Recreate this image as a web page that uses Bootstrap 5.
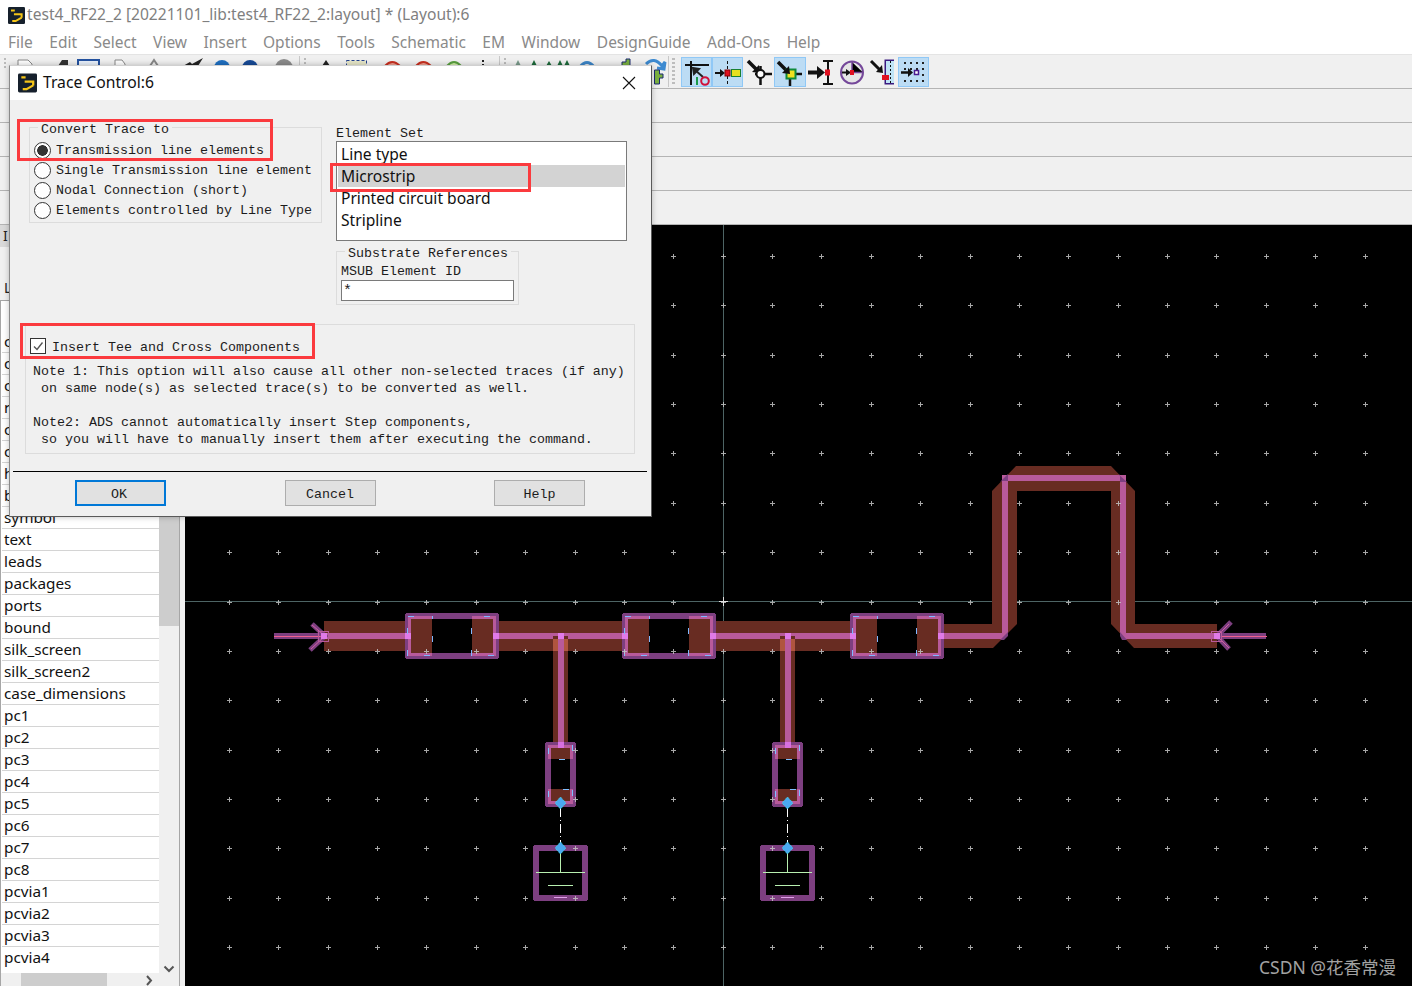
<!DOCTYPE html>
<html lang="en">
<head>
    <meta charset="UTF-8">
    <meta name="viewport" content="width=device-width, initial-scale=1.0">
    <title>Trace Control</title>
    <link href="https://cdn.jsdelivr.net/npm/bootstrap@5.3.0/dist/css/bootstrap.min.css" rel="stylesheet">
    <style>
        html, body { margin: 0; height: 100%; overflow: hidden; background: #f0f0f0; }
        .app-win { position: relative; width: 1412px; height: 986px; overflow: hidden; font-family: "Noto Sans", "Liberation Sans", sans-serif; }

        .title-row { height: 30px; background: #fff; padding-left: 8px; color: #7f7f7f; font-size: 15.6px; }
        .title-row svg { margin-right: 2px; margin-top: 1px; }
        .menu-row { height: 25px; background: #fff; border-bottom: 1px solid #e4e4e4; padding-left: 8px; gap: 16.5px; color: #8a8a8a; font-size: 15.5px; padding-top: 2px; }
        .tool-row { height: 34px; background: #f0f0f0; border-bottom: 1px solid #b4b4b4; }
        .tool-scraps { width: 668px; height: 33px; flex: none; }
        .tool-sep { width: 1px; height: 31px; background: #c8c8c8; margin: 1px 3px 0 0; }
        .tool-grip { width: 3px; height: 27px; margin: 3px 6px 0 0; background: repeating-linear-gradient(#bdbdbd 0 2px, transparent 2px 4px); }
        .tool-btn { width: 31px; height: 30px; margin-top: 2px; border: 1px solid transparent; flex: none; }
        .tool-btn.on { background: #bcdcf4; border-color: #90c8f6; }
        .tool-btn svg { display: block; margin: -1px; overflow: visible; }
        .tb-3 { width: 29px; margin-left: 2px; }
        .tb-4 { width: 32px; }
        .tb-5, .tb-7 { width: 30px; }
        .tb-6 { width: 32px; }
        .strip-row { height: 34px; background: #f0f0f0; border-bottom: 1px solid #b4b4b4; }

        .main-area { height: 761px; }
        .side-panel { width: 185px; flex: none; background: #f0f0f0; padding-right: 5px; }
        .side-head { height: 22px; width: 9px; background: #d9d9d9; color: #222; font-size: 14px; line-height: 22px; padding-left: 3px; overflow: hidden; }
        .side-label { height: 53px; padding-top: 30px; padding-left: 4px; color: #222; font-size: 14px; line-height: 22px; }
        .side-frame { height: 686px; border: 1px solid #a6a6a6; border-width: 1px 1px 0 1px; background: #fff; overflow: hidden; }
        .layer-col { width: 158px; flex: none; padding-top: 30px; padding-left: 1px; }
        .layer-item { height: 22px; padding: 0 0 0 2px; border: 0; border-bottom: 2px solid #d4d4d4; border-radius: 0 !important; font-size: 15.3px; line-height: 20px; color: #111; background: #fff; }
        .vscroll { width: 20px; flex: none; height: 672px; background: #f0f0f0; }
        .vs-thumb { height: 300px; margin-top: 25px; background: #cdcdcd; }
        .vs-down { margin-top: auto; height: 18px; }
        .hscroll { height: 14px; background: #f0f0f0; }
        .hs-thumb { width: 86px; margin-left: 20px; background: #cdcdcd; }
        .canvas-wrap svg { display: block; }

        .trace-dlg { position: absolute; left: 9px; top: 65px; width: 643px; height: 452px; background: #f0f0f0; border-right: 1px solid #5a5a5a; border-bottom: 1px solid #5a5a5a; border-left: 1px solid #8a8a8a; border-top: 1px solid #d0d0d0; box-shadow: 0 0 6px rgba(0,0,0,.25); font-family: "Liberation Mono", "DejaVu Sans Mono", monospace; font-size: 13.33px; color: #1c1c1c; }
        .dlg-head { height: 34px; background: #fff; padding-left: 8px; font-family: "Noto Sans", "Liberation Sans", sans-serif; font-size: 15.7px; color: #111; }
        .dlg-head svg { margin-right: 6px; }
        .dlg-close { margin-left: auto; margin-right: 15px !important; }
        .dlg-body { padding-top: 27px; }
        .grp-box { position: relative; border: 1px solid #dcdcdc; }
        .grp-title { position: absolute; top: -5px; left: 8px; padding: 0 3px; line-height: 14px; background: #f0f0f0; }
        .convert-box { width: 293px; height: 96px; margin-left: 19px; padding: 12px 0 0 4px; flex: none; }
        .radio-row { height: 20px; gap: 5px; white-space: pre; }
        .radio-row span { padding-top: 2px; }
        .radio-row .form-check-input, .tee-row .form-check-input { margin: 0; float: none; flex: none; box-shadow: none; }
        .radio-row .form-check-input { width: 17px; height: 17px; border: 1px solid #333; background-color: #fff; }
        .radio-row .form-check-input:checked { background-color: #fff; border-color: #333; background-image: radial-gradient(circle, #333 0 5px, transparent 5.6px); }
        .elem-col { width: 291px; margin-left: 14px; flex: none; }
        .elem-label { height: 14px; line-height: 14px; }
        .elem-list { height: 100px; background: #fff; border: 1px solid #7a7a7a; padding: 1px; font-family: "Noto Sans", "Liberation Sans", sans-serif; font-size: 15.6px; color: #111; }
        .elem-opt { height: 22px; line-height: 22px; padding-left: 3px; }
        .elem-opt.picked { background: #d3d3d3; }
        .subst-box { width: 183px; height: 54px; margin-top: 10px; padding: 13px 4px 0 4px; line-height: 14px; }
        .subst-field { height: 21px; line-height: 21px; background: #fff; border: 1px solid #7a7a7a; padding-left: 1px; margin-top: 1px; font-size: 15px; }
        .tee-box { width: 610px; height: 130px; margin: 19px 0 0 15px; padding: 13px 0 0 4px; }
        .tee-row { height: 16px; gap: 6px; }
        .tee-row span { padding-top: 4px; }
        .tee-row .form-check-input { width: 16px; height: 16px; border: 1px solid #333; border-radius: 0; background-color: #fff; background-size: 12px; }
        .tee-row .form-check-input:checked { background-color: #fff; border-color: #333; background-image: url("data:image/svg+xml,%3Csvg xmlns='http://www.w3.org/2000/svg' viewBox='0 0 12 12'%3E%3Cpath d='M2 6.5 5 9.5 10.5 2.5' fill='none' stroke='%23555' stroke-width='1.4'/%3E%3C/svg%3E"); }
        .note-text { margin: 9px 0 0 3px; font-family: inherit; font-size: 13.33px; line-height: 17px; white-space: pre; overflow: visible; color: inherit; }
        .dlg-rule { height: 1px; width: 634px; margin: 17px 0 0 3px; background: #000; }
        .dlg-btns { margin: 8px 0 0 65px; gap: 118.5px; }
        .win-btn { width: 91px; height: 26px; padding: 4px 0 0; border: 1px solid #adadad; border-radius: 0; background: #e1e1e1; color: #1c1c1c; font-family: inherit; font-size: 13.33px; line-height: 20px; }
        .win-btn.is-default { border: 2px solid #0078d7; line-height: 18px; padding-right: 3px; }

        .red-mark { position: absolute; border: 3px solid #fb3a3e; pointer-events: none; }
        .red-a { left: 17px; top: 119px; width: 256px; height: 42px; }
        .red-b { left: 330px; top: 163px; width: 201px; height: 29px; }
        .red-c { left: 20px; top: 323px; width: 295px; height: 36px; }
        .csdn-mark { position: absolute; left: 1259px; top: 955px; color: #a2a2a2; font-size: 17.5px; line-height: 24px; font-family: "Noto Sans", "Noto Sans CJK SC", sans-serif; white-space: nowrap; }
    </style>
</head>
<body>
<svg width="0" height="0" class="position-absolute">
    <symbol id="adsIcon" viewBox="0 0 20 20">
        <rect width="20" height="20" rx="1.5" fill="#16202c"/>
        <path d="M3.500 4H8M7 8.500H16V12.500M16 12.500 9 16.500H5" fill="none" stroke="#f5c518" stroke-width="2.400"/>
    </symbol>
</svg>

<div class="app-win">
    <div class="title-row d-flex align-items-center">
        <svg width="17" height="19"><use href="#adsIcon"/></svg>
        <span>test4_RF22_2 [20221101_lib:test4_RF22_2:layout] * (Layout):6</span>
    </div>
    <div class="menu-row d-flex align-items-center">
        <span>File</span><span>Edit</span><span>Select</span><span>View</span><span>Insert</span><span>Options</span><span>Tools</span><span>Schematic</span><span>EM</span><span>Window</span><span>DesignGuide</span><span>Add-Ons</span><span>Help</span>
    </div>

    <div class="tool-row d-flex">
        <svg class="tool-scraps" viewBox="0 55 668 33">
            <path d="M5 58v2M5 62v2M5 66v2" stroke="#bbb" stroke-width="2"/>
            <path d="M18 66V60H28L32 64V66" fill="#fff" stroke="#888"/>
            <path d="M58 66L62 60H68V66Z" fill="#333"/>
            <rect x="78" y="60" width="21" height="8" fill="#e8f0fa" stroke="#2452a0" stroke-width="2"/>
            <path d="M115 66V60H122L125 64V66" fill="#fff" stroke="#888"/>
            <path d="M150 66 154 60 158 66" fill="none" stroke="#888" stroke-width="2"/>
            <path d="M183 66 190 62 192 64 203 58 198 66Z" fill="#222"/>
            <circle cx="222" cy="68" r="8" fill="#1f6fc0"/>
            <circle cx="250" cy="68" r="8" fill="#174a96"/>
            <circle cx="284" cy="68" r="9" fill="#8c8c8c"/>
            <path d="M299.500 56V87M499.500 56V87" stroke="#c8c8c8"/>
            <path d="M305 58v2M305 62v2M505 58v2M505 62v2" stroke="#bbb" stroke-width="2"/>
            <path d="M322 66 326 60 330 66Z" fill="#222"/>
            <rect x="346.500" y="60.500" width="20" height="8" fill="#e6e6c8" stroke="#23418c" stroke-dasharray="3 2"/>
            <path d="M385 66Q392 58 400 66" fill="#f0a090" stroke="#c83020" stroke-width="2"/>
            <path d="M416 66Q423 58 431 66" fill="#f0a090" stroke="#c83020" stroke-width="2"/>
            <path d="M447 66Q454 58 461 66" fill="#d0f0a8" stroke="#5aa040" stroke-width="2"/>
            <path d="M483 60v2M483 64v2" stroke="#222" stroke-width="2"/>
            <path d="M518 60 515 66H521Z" fill="#7a9a8a"/>
            <path d="M534 60 531 66H537Z M549 61 546 66H552Z M560 60 557 66H563Z M567 60 564 66H570Z" fill="#1d6a3a"/>
            <path d="M580 67Q587 58 594 67" fill="none" stroke="#3d86c8" stroke-width="3"/>
            <path d="M622 66V62H626V59H630V66Z" fill="#7ab040" stroke="#1d2a70"/>
            <path d="M646 64Q654 56 662 66L665 62 664 69 657 68" fill="none" stroke="#3d8ad0" stroke-width="3"/>
            <path d="M654.500 70H659.500V74H663V78H659.500V84H654.500Z" fill="#7ab040" stroke="#1d2a70"/>
        </svg>
        <div class="tool-sep"></div>
        <div class="tool-grip"></div>
        <div class="tool-btn on">
            <svg width="31" height="30"><path d="M4 8H28M10 4V28" stroke="#111" stroke-width="2"/><path d="M22 20 14 13M12 11l6 1-5 5z" stroke="#222" stroke-width="2" fill="#222"/><path d="M16 20V28" stroke="#1a9a4a" stroke-width="2"/><circle cx="24" cy="24" r="3.800" fill="none" stroke="#d0103a" stroke-width="2"/></svg>
        </div>
        <div class="tool-btn on">
            <svg width="31" height="30"><path d="M3 16H9" stroke="#111" stroke-width="2"/><path d="M8 12l5 4-5 4z" fill="#111"/><path d="M15.500 4V28" stroke="#111" stroke-dasharray="3 2"/><rect x="13" y="13" width="5" height="6" fill="#e01020" stroke="#800"/><rect x="19.500" y="12.500" width="9" height="7" fill="#e8e020" stroke="#1a8030"/></svg>
        </div>
        <div class="tool-btn tb-3">
            <svg width="31" height="30"><path d="M3 4 13 14" stroke="#111" stroke-width="3.500"/><path d="M7 15 15 16 14 8z" fill="#111"/><path d="M10 17H27M15.500 9V28" stroke="#111" stroke-width="2.500"/><circle cx="15.500" cy="17" r="4" fill="#fff" stroke="#111" stroke-width="2"/></svg>
        </div>
        <div class="tool-btn on tb-4">
            <svg width="31" height="30"><path d="M4 5 14 15" stroke="#111" stroke-width="3.500"/><path d="M22 17H28M16 22V29" stroke="#111" stroke-width="2.500"/><rect x="12.500" y="12.500" width="9" height="9" fill="#f0e020" stroke="#0f8a3a" stroke-width="2"/><path d="M8 16 16 17 15 9z" fill="#111"/></svg>
        </div>
        <div class="tool-btn tb-5">
            <svg width="31" height="30"><path d="M2 15.500H13" stroke="#111" stroke-width="4"/><path d="M11 9 19 15.500 11 22z" fill="#111"/><path d="M22 4V27M17 4H27M17 27H27" stroke="#111" stroke-width="2"/><rect x="19" y="12.500" width="5" height="6" fill="#e01020"/></svg>
        </div>
        <div class="tool-btn tb-6">
            <svg width="31" height="30"><circle cx="16" cy="15.500" r="11" fill="#e6e6e6" stroke="#75489a" stroke-width="2"/><path d="M16 5V15.500H27" stroke="#75489a" stroke-width="1.500"/><path d="M6 15.500H11" stroke="#111" stroke-width="2"/><path d="M10 12l5 3.500-5 3.500z" fill="#111"/><rect x="14" y="13" width="4" height="5" fill="#e01020"/></svg>
        </div>
        <div class="tool-btn tb-7">
            <svg width="31" height="30"><path d="M3 4 13 14" stroke="#111" stroke-width="3"/><path d="M8 15 15 16 14 8z" fill="#111"/><path d="M26 3.500H17.500V26.500H26" fill="#bfe4f6" stroke="#3a1a80" stroke-width="2"/><rect x="18" y="4" width="8" height="22" fill="#bfe4f6"/><path d="M22.500 4V26" stroke="#111" stroke-dasharray="2 2"/><rect x="14" y="18" width="7" height="5" fill="#e01020"/></svg>
        </div>
        <div class="tool-btn on">
            <svg width="31" height="30"><path d="M6 5h2v2H6zM12 5h2v2h-2zM18 5h2v2h-2zM24 5h2v2h-2zM12 11h2v2h-2zM18 11h2v2h-2zM24 11h2v2h-2zM24 17h2v2h-2zM6 23h2v2H6zM12 23h2v2h-2zM18 23h2v2h-2zM24 23h2v2h-2zM6 11h2v2H6z" fill="#222"/><path d="M3 15.500H11" stroke="#111" stroke-width="2.500"/><path d="M10 11l5 4.500-5 4.500z" fill="#111"/><rect x="16.500" y="13.500" width="4" height="4" fill="#fff" stroke="#4a1a90" stroke-width="1.500"/></svg>
        </div>
    </div>
    <div class="strip-row"></div>
    <div class="strip-row"></div>
    <div class="strip-row"></div>
    <div class="strip-row"></div>

    <div class="main-area d-flex">
        <div class="side-panel d-flex flex-column">
            <div class="side-head">I</div>
            <div class="side-label">L</div>
            <div class="side-frame">
                <div class="d-flex">
                    <ul class="layer-col list-group list-group-flush">
                        <li class="list-group-item layer-item">cond</li>
                        <li class="list-group-item layer-item">cu1</li>
                        <li class="list-group-item layer-item">cu2</li>
                        <li class="list-group-item layer-item">resi</li>
                        <li class="list-group-item layer-item">cu3</li>
                        <li class="list-group-item layer-item">cu4</li>
                        <li class="list-group-item layer-item">hole</li>
                        <li class="list-group-item layer-item">bond</li>
                        <li class="list-group-item layer-item">symbol</li>
                        <li class="list-group-item layer-item">text</li>
                        <li class="list-group-item layer-item">leads</li>
                        <li class="list-group-item layer-item">packages</li>
                        <li class="list-group-item layer-item">ports</li>
                        <li class="list-group-item layer-item">bound</li>
                        <li class="list-group-item layer-item">silk_screen</li>
                        <li class="list-group-item layer-item">silk_screen2</li>
                        <li class="list-group-item layer-item">case_dimensions</li>
                        <li class="list-group-item layer-item">pc1</li>
                        <li class="list-group-item layer-item">pc2</li>
                        <li class="list-group-item layer-item">pc3</li>
                        <li class="list-group-item layer-item">pc4</li>
                        <li class="list-group-item layer-item">pc5</li>
                        <li class="list-group-item layer-item">pc6</li>
                        <li class="list-group-item layer-item">pc7</li>
                        <li class="list-group-item layer-item">pc8</li>
                        <li class="list-group-item layer-item">pcvia1</li>
                        <li class="list-group-item layer-item">pcvia2</li>
                        <li class="list-group-item layer-item">pcvia3</li>
                        <li class="list-group-item layer-item">pcvia4</li>
                    </ul>
                    <div class="vscroll d-flex flex-column">
                        <div class="vs-thumb"></div>
                        <div class="vs-down text-center"><svg width="12" height="8"><path d="M1.500 1.500 6 6 10.500 1.500" fill="none" stroke="#555" stroke-width="2"/></svg></div>
                    </div>
                </div>
                <div class="hscroll d-flex">
                    <div class="hs-thumb"></div>
                    <svg class="ms-auto" width="36" height="14"><path d="M4 3 8 7.500 4 12" fill="none" stroke="#555" stroke-width="2"/></svg>
                </div>
            </div>
        </div>
        <div class="canvas-wrap flex-grow-1">
            <svg id="layoutCanvas" width="1227" height="761" viewBox="185 225 1227 761" shape-rendering="crispEdges" style="background:#000">
                <defs>
                    <g id="padComp">
                        <rect x="405" y="613" width="94" height="46" rx="3" fill="#7d3f80"/>
                        <rect x="411" y="619" width="82" height="34" fill="#000"/>
                        <path d="M408 616H432V619H411V653H432V656H408ZM496 616H472V619H493V653H472V656H496Z" fill="#b85a9b"/>
                        <rect x="411" y="619" width="21" height="34" fill="#682c22"/>
                        <rect x="472" y="619" width="21" height="34" fill="#682c22"/>
                        <rect x="405" y="633" width="6" height="6" fill="#e07ae8"/>
                        <rect x="493" y="633" width="6" height="6" fill="#e07ae8"/>
                        <path d="M408 616.500H414M432.500 616V619M432.500 636V642M471.500 628V634M471.500 650V656M484 616.500H490M424 655.500H430M488 655.500H494M407.500 628V634M407.500 650V656" stroke="#7fb8ff" fill="none"/>
                    </g>
                    <g id="stubComp">
                        <rect x="553" y="636" width="15" height="107" fill="#682c22"/>
                        <rect x="553" y="639" width="15" height="12" fill="#b0553f"/>
                        <rect x="558" y="633" width="6" height="112" fill="#b85a9b"/>
                        <rect x="558" y="633" width="6" height="6" fill="#e07ae8"/>
                        <rect x="545" y="742" width="31" height="65" rx="3" fill="#7d3f80"/>
                        <rect x="551" y="748" width="19" height="53" fill="#000"/>
                        <path d="M548 745H573V759H570V748H551V759H548ZM548 789H551V801H570V789H573V804H548Z" fill="#b85a9b"/>
                        <rect x="551" y="748" width="19" height="11" fill="#682c22"/>
                        <rect x="551" y="789" width="19" height="12" fill="#682c22"/>
                        <rect x="558" y="742" width="6" height="6" fill="#d870e0"/>
                        <path d="M559 759.500H565M563 789.500H569M548.500 748V754M572.500 745V751M548.500 791V797M572.500 790V796" stroke="#7fc0ff" fill="none"/>
                        <path d="M560.500 808V848" stroke="#fff" stroke-dasharray="9 3 1 3"/>
                        <rect x="533" y="845" width="55" height="56" rx="3" fill="#7d3f80"/>
                        <rect x="539" y="851" width="43" height="44" fill="#000"/>
                        <path d="M560.500 851V872M536 872.500H585M548 885.500H573" stroke="#b8f0b0" fill="none"/>
                        <path d="M554 897.500H567" stroke="#e0a0e8" fill="none"/>
                        <g shape-rendering="auto">
                            <path d="M560.500 797 566 803 560.500 809 555 803Z" fill="#4aa8f0" stroke="#40e0f0" stroke-dasharray="1 1"/>
                            <path d="M560.500 842 566 848 560.500 854 555 848Z" fill="#4aa8f0" stroke="#40e0f0" stroke-dasharray="1 1"/>
                        </g>
                    </g>
                </defs>

                <path d="M185 601.500H1412M723.500 225V986" stroke="#4d6464" fill="none"/>

                <rect x="324" y="621" width="620" height="30" fill="#682c22"/>
                <path d="M942 624H992V491L1016 466H1111L1135 491V624H1217V648H1134L1111 624V491H1017V624L993 648H942Z" fill="#682c22" shape-rendering="auto"/>
                <path d="M1002 481V633H942V639H1004L1008 635V481ZM1120 481V635L1124 639H1217V633H1126V481Z" fill="#b85a9b"/>
                <rect x="324" y="633" width="660" height="6" fill="#b85a9b"/>
                <rect x="1002" y="475" width="124" height="6" fill="#b85a9b"/>
                <path d="M1000 482 1008 474V481H1002ZM1118 474 1127 482H1120V475ZM1000 640 1008 632V636L1004 640ZM1120 632 1127 640H1122L1120 636Z" fill="#7d3f80" shape-rendering="auto"/>

                <use href="#stubComp"/>
                <use href="#stubComp" x="227"/>
                <use href="#padComp"/>
                <use href="#padComp" x="217"/>
                <use href="#padComp" x="445"/>

                <!-- ports -->
                <g>
                    <rect x="274" y="633" width="50" height="6" fill="#7d3f80"/>
                    <rect x="274" y="636" width="50" height="1" fill="#f0608f"/>
                    <path d="M312 624 325 636 310 650" fill="none" stroke="#7d3f80" stroke-width="5" shape-rendering="auto"/>
                    <path d="M312 625 325 636 311 649" fill="none" stroke="#d060a0" stroke-width="1" shape-rendering="auto"/>
                    <rect x="318.500" y="631.500" width="10" height="10" fill="none" stroke="#b85a9b"/>
                    <rect x="321" y="633" width="6" height="6" fill="#e07ae8"/>
                </g>
                <g>
                    <rect x="1217" y="633" width="49" height="6" fill="#7d3f80"/>
                    <rect x="1217" y="636" width="50" height="1" fill="#f0608f"/>
                    <path d="M1231 622 1217 636 1229 649" fill="none" stroke="#7d3f80" stroke-width="5" shape-rendering="auto"/>
                    <path d="M1229 624 1217 636 1229 648" fill="none" stroke="#d060a0" stroke-width="1" shape-rendering="auto"/>
                    <rect x="1211.500" y="631.500" width="10" height="10" fill="none" stroke="#b85a9b"/>
                    <rect x="1214" y="633" width="6" height="6" fill="#e07ae8"/>
                </g>

                <path id="gridMarks" d="" stroke="#c4c4c4" stroke-opacity=".85" fill="none"/>
                <path d="M719 601.500H728M723.500 597V606" stroke="#e0e0e0" fill="none"/>
            </svg>
        </div>
    </div>

    <div class="trace-dlg">
        <div class="dlg-head d-flex align-items-center">
            <svg width="19" height="20"><use href="#adsIcon"/></svg>
            <span>Trace Control:6</span>
            <svg class="dlg-close" width="14" height="14" shape-rendering="auto"><path d="M1 1 13 13M13 1 1 13" stroke="#111" stroke-width="1.100"/></svg>
        </div>
        <div class="dlg-body">
            <div class="d-flex">
                <div class="grp-box convert-box">
                    <span class="grp-title">Convert Trace to</span>
                    <div class="radio-row d-flex align-items-center"><input class="form-check-input" type="radio" name="conv" checked><span>Transmission line elements</span></div>
                    <div class="radio-row d-flex align-items-center"><input class="form-check-input" type="radio" name="conv"><span>Single Transmission line element</span></div>
                    <div class="radio-row d-flex align-items-center"><input class="form-check-input" type="radio" name="conv"><span>Nodal Connection (short)</span></div>
                    <div class="radio-row d-flex align-items-center"><input class="form-check-input" type="radio" name="conv"><span>Elements controlled by Line Type</span></div>
                </div>
                <div class="elem-col">
                    <div class="elem-label">Element Set</div>
                    <div class="elem-list">
                        <div class="elem-opt">Line type</div>
                        <div class="elem-opt picked">Microstrip</div>
                        <div class="elem-opt">Printed circuit board</div>
                        <div class="elem-opt">Stripline</div>
                    </div>
                    <div class="grp-box subst-box">
                        <span class="grp-title">Substrate References</span>
                        <div>MSUB Element ID</div>
                        <div class="subst-field">*</div>
                    </div>
                </div>
            </div>
            <div class="grp-box tee-box">
                <div class="tee-row d-flex align-items-center"><input class="form-check-input" type="checkbox" checked><span>Insert Tee and Cross Components</span></div>
                <pre class="note-text">Note 1: This option will also cause all other non-selected traces (if any)
 on same node(s) as selected trace(s) to be converted as well.

Note2: ADS cannot automatically insert Step components,
 so you will have to manually insert them after executing the command.</pre>
            </div>
            <div class="dlg-rule"></div>
            <div class="dlg-btns d-flex">
                <button type="button" class="btn win-btn is-default">OK</button>
                <button type="button" class="btn win-btn">Cancel</button>
                <button type="button" class="btn win-btn">Help</button>
            </div>
        </div>
    </div>

    <div class="red-mark red-a"></div>
    <div class="red-mark red-b"></div>
    <div class="red-mark red-c"></div>
    <div class="csdn-mark">CSDN @花香常漫</div>
</div>

<script src="https://cdn.jsdelivr.net/npm/bootstrap@5.3.0/dist/js/bootstrap.bundle.min.js"></script>
<script>
    // layout grid crosses
    var d = '';
    for (var i = 0; i < 24; i++) {
        for (var j = 0; j < 15; j++) {
            var x = Math.round(229 + i * 49.37) + 0.5;
            var y = Math.round(256 + j * 49.36) + 0.5;
            d += 'M' + (x - 2.5) + ' ' + y + 'h5M' + x + ' ' + (y - 2.5) + 'v5';
        }
    }
    document.getElementById('gridMarks').setAttribute('d', d);
</script>
</body>
</html>
